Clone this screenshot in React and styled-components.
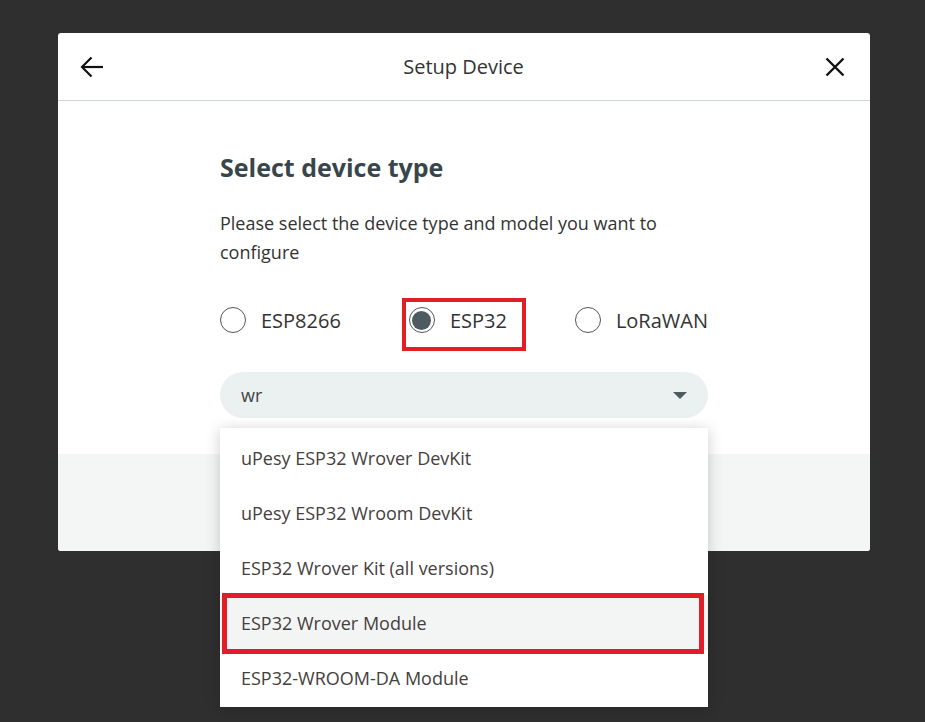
import React from 'react';
import styled, { createGlobalStyle } from 'styled-components';

const GlobalStyle = createGlobalStyle`
  html, body {
    margin: 0;
    padding: 0;
    background: #2f2f2f;
    font-family: "Open Sans", "Noto Sans", sans-serif;
  }
`;

const Backdrop = styled.div`
  width: 925px;
  height: 722px;
  padding: 33px 0 0 58px;
  box-sizing: border-box;
  overflow: hidden;
`;

const Modal = styled.div`
  width: 812px;
  background: #fff;
  border-radius: 3px;
  display: flex;
  flex-direction: column;
`;

const Header = styled.div`
  height: 67px;
  border-bottom: 1px solid #cfd6d6;
  display: flex;
  align-items: center;
  justify-content: space-between;
  padding: 0 23px 0 22px;
`;

const IconButton = styled.button`
  width: 24px;
  height: 24px;
  padding: 0;
  border: none;
  background: transparent;
  display: flex;
  align-items: center;
  justify-content: center;
  cursor: pointer;
`;

const HeaderTitle = styled.div`
  font-size: 20px;
  color: #333;
`;

const Body = styled.div`
  height: 353px;
  padding: 50px 0 0 162px;
  box-sizing: border-box;
`;

const Column = styled.div`
  width: 488px;
  display: flex;
  flex-direction: column;
`;

const Title = styled.h2`
  margin: 0;
  font-size: 25px;
  line-height: 32px;
  font-weight: 700;
  color: #38454b;
`;

const Description = styled.p`
  margin: 26px 0 0;
  font-size: 18px;
  line-height: 29px;
  color: #333;
`;

const RadioRow = styled.div`
  margin-top: 40px;
  display: flex;
  justify-content: space-between;
  align-items: center;
  height: 26px;
`;

const RadioOption = styled.label`
  position: relative;
  display: flex;
  align-items: center;
  gap: 15px;
  font-size: 20px;
  color: #333;

  ${(p) =>
    p.$marked &&
    `
    &::after {
      content: '';
      position: absolute;
      left: -7px;
      right: -19px;
      top: -9px;
      bottom: -17px;
      border: 4px solid #e31d25;
    }
  `}
`;

const RadioCircle = styled.span`
  width: 26px;
  height: 26px;
  box-sizing: border-box;
  border-radius: 50%;
  border: 1.5px solid #555;
  display: flex;
  align-items: center;
  justify-content: center;

  &::before {
    content: '';
    width: 19px;
    height: 19px;
    border-radius: 50%;
    background: ${(p) => (p.$checked ? '#4d5a60' : 'transparent')};
  }
`;

const SelectWrap = styled.div`
  position: relative;
  margin-top: 39px;
`;

const SelectBox = styled.div`
  height: 46px;
  border-radius: 23px;
  background: #ebf0f0;
  display: flex;
  align-items: center;
  justify-content: space-between;
  padding: 0 21px;
  font-size: 18px;
  color: #444;
`;

const Caret = styled.span`
  width: 0;
  height: 0;
  border-left: 7px solid transparent;
  border-right: 7px solid transparent;
  border-top: 7px solid #4d5a60;
  margin-top: 1px;
`;

const Menu = styled.ul`
  position: absolute;
  top: 56px;
  left: 0;
  width: 488px;
  margin: 0;
  padding: 2px 0;
  list-style: none;
  background: #fff;
  box-shadow: 0 2px 14px rgba(0, 0, 0, 0.2);
  z-index: 2;
`;

const MenuItem = styled.li`
  position: relative;
  height: 55px;
  display: flex;
  align-items: center;
  padding-left: 21px;
  font-size: 18px;
  color: #45403d;
  background: ${(p) => (p.$active ? '#f3f5f5' : '#fff')};
  z-index: ${(p) => (p.$active ? 1 : 0)};

  ${(p) =>
    p.$active &&
    `
    &::after {
      content: '';
      position: absolute;
      left: 2px;
      right: 4px;
      top: -2px;
      bottom: -4px;
      border: 5px solid #e31d25;
    }
  `}
`;

const Footer = styled.div`
  height: 97px;
  background: #f4f6f6;
  border-radius: 0 0 3px 3px;
`;

const BackIcon = () => (
  <svg width="24" height="22" viewBox="0 0 24 22" fill="none" stroke="#111" strokeWidth="2.2">
    <path d="M23 11H2.5" />
    <path d="M11.5 1.5L2 11l9.5 9.5" />
  </svg>
);

const CloseIcon = () => (
  <svg width="20" height="20" viewBox="0 0 20 20" fill="none" stroke="#111" strokeWidth="2.4">
    <path d="M1.5 1.5l17 17M18.5 1.5l-17 17" />
  </svg>
);

const types = [
  { label: 'ESP8266' },
  { label: 'ESP32', checked: true },
  { label: 'LoRaWAN' },
];

const models = [
  'uPesy ESP32 Wrover DevKit',
  'uPesy ESP32 Wroom DevKit',
  'ESP32 Wrover Kit (all versions)',
  'ESP32 Wrover Module',
  'ESP32-WROOM-DA Module',
];

const App = () => {
  return (
    <Backdrop>
      <GlobalStyle />
      <Modal>
        <Header>
          <IconButton>
            <BackIcon />
          </IconButton>
          <HeaderTitle>Setup Device</HeaderTitle>
          <IconButton>
            <CloseIcon />
          </IconButton>
        </Header>
        <Body>
          <Column>
            <Title>Select device type</Title>
            <Description>
              Please select the device type and model you want to configure
            </Description>
            <RadioRow>
              {types.map((t) => (
                <RadioOption key={t.label} $marked={t.checked}>
                  <RadioCircle $checked={t.checked} />
                  {t.label}
                </RadioOption>
              ))}
            </RadioRow>
            <SelectWrap>
              <SelectBox>
                wr
                <Caret />
              </SelectBox>
              <Menu>
                {models.map((m) => (
                  <MenuItem key={m} $active={m === 'ESP32 Wrover Module'}>
                    {m}
                  </MenuItem>
                ))}
              </Menu>
            </SelectWrap>
          </Column>
        </Body>
        <Footer />
      </Modal>
    </Backdrop>
  );
};

export default App;
